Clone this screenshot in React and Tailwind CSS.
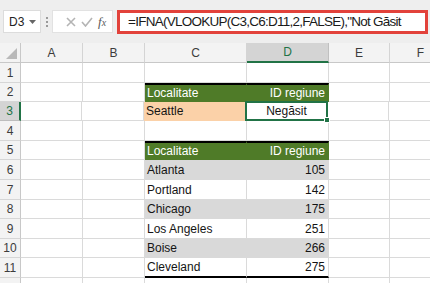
import React from "react";

const rowHeights = [20, 19, 19, 20, 19, 20, 20, 19, 20, 19, 20, 10];

const GREEN = "bg-[#4f7b28]";

function CellC({ r }) {
  const base = "h-full w-[102px] shrink-0 border-r border-b flex items-center px-[2px] text-[12px] text-[#141414]";
  if (r === 2 || r === 5)
    return (
      <div className={`${base} ${GREEN} border-[#4f7b28] border-t-2 border-t-black text-white`}>
        Localitate
      </div>
    );
  if (r === 3)
    return <div className={`${base} bg-[#fbd1a8] border-[#fbd1a8]`}>Seattle</div>;
  const cities = { 6: "Atlanta", 7: "Portland", 8: "Chicago", 9: "Los Angeles", 10: "Boise", 11: "Cleveland" };
  if (cities[r]) {
    const gray = r % 2 === 0;
    const bottom = r === 11 ? "border-b-2 border-b-black" : "";
    return (
      <div className={`${base} ${gray ? "bg-[#d9d9d9] border-[#d9d9d9]" : "bg-white border-[#dadada]"} ${bottom}`}>
        {cities[r]}
      </div>
    );
  }
  return <div className={`${base} bg-white border-[#dadada]`} />;
}

function CellD({ r }) {
  const base = "h-full w-[82px] shrink-0 border-r border-b flex items-center px-[3px] text-[12px] text-[#141414]";
  if (r === 2 || r === 5)
    return (
      <div className={`${base} ${GREEN} border-[#4f7b28] border-t-2 border-t-black text-white justify-end`}>
        ID regiune
      </div>
    );
  if (r === 3)
    return (
      <div className={`${base} bg-white border-[#dadada] justify-center relative`}>
        Negăsit
        <div className="absolute -left-[1px] -top-[1px] -right-[1px] -bottom-[1px] border-2 border-[#217346]" />
        <div className="absolute -right-[3px] -bottom-[3px] w-[6px] h-[6px] bg-[#217346] border border-white" />
      </div>
    );
  const nums = { 6: "105", 7: "142", 8: "175", 9: "251", 10: "266", 11: "275" };
  if (nums[r]) {
    const gray = r % 2 === 0;
    const bottom = r === 11 ? "border-b-2 border-b-black" : "";
    return (
      <div className={`${base} justify-end ${gray ? "bg-[#d9d9d9] border-[#d9d9d9]" : "bg-white border-[#dadada]"} ${bottom}`}>
        {nums[r]}
      </div>
    );
  }
  return <div className={`${base} bg-white border-[#dadada]`} />;
}

function Plain({ w }) {
  return <div className={`h-full ${w} shrink-0 bg-white border-r border-b border-[#dadada]`} />;
}

function Row({ r, h }) {
  const sel = r === 3;
  return (
    <div className="flex" style={{ height: h }}>
      <div
        className={`h-full w-[21px] shrink-0 flex items-center justify-center text-[12px] border-b ${
          sel
            ? "bg-[#d4d4d4] text-[#217346] border-r-2 border-r-[#217346] border-b-[#bdbdbd]"
            : "bg-[#f3f3f3] text-[#3c3c3c] border-r border-r-[#c8c8c8] border-b-[#d6d6d6]"
        }`}
      >
        {r <= 11 ? r : ""}
      </div>
      <Plain w={sel ? "w-[61px]" : "w-[62px]"} />
      <Plain w="w-[62px]" />
      <CellC r={r} />
      <CellD r={r} />
      <Plain w="w-[61px]" />
      <Plain w="w-[62px]" />
    </div>
  );
}

export default function App() {
  return (
    <div className="w-[430px] h-[283px] overflow-hidden bg-[#eeeeee] font-['Liberation_Sans',Arial,sans-serif]">
      {/* Toolbar */}
      <div className="h-[43px] flex items-start pt-[10px] pl-[3px]">
        <div className="w-[38px] h-[23px] bg-white border border-[#dcdcdc] flex items-center pl-[5px] text-[12px] text-[#222]">
          <span>D3</span>
          <svg width="7" height="4" viewBox="0 0 7 4" className="ml-[5px]">
            <path d="M0 0H7L3.5 4Z" fill="#666" />
          </svg>
        </div>
        <div className="w-[11px] h-[23px] flex flex-col items-center justify-center gap-[2px]">
          <div className="w-[2px] h-[2px] bg-[#9a9a9a]" />
          <div className="w-[2px] h-[2px] bg-[#9a9a9a]" />
          <div className="w-[2px] h-[2px] bg-[#9a9a9a]" />
        </div>
        <div className="w-[61px] h-[23px] bg-white border border-[#e2e2e2] flex items-center pl-[13px] gap-[5px]">
          <svg width="10" height="10" viewBox="0 0 10 10">
            <path d="M1 1L9 9M9 1L1 9" stroke="#b4b4b4" strokeWidth="1.6" />
          </svg>
          <svg width="12" height="10" viewBox="0 0 12 10">
            <path d="M1 5L4.5 9L11 1" stroke="#b4b4b4" strokeWidth="1.6" fill="none" />
          </svg>
          <span className="font-['Liberation_Serif',serif] italic text-[13px] text-[#5a5a5a] leading-none">
            f<span className="text-[10px]">x</span>
          </span>
        </div>
        <div className="ml-[4px] w-[311px] h-[24px] bg-white border-[3px] border-[#e2423b] flex items-center pl-[8px] text-[13.5px] tracking-[-0.75px] text-[#1a1a1a] whitespace-nowrap overflow-hidden">
          =IFNA(VLOOKUP(C3,C6:D11,2,FALSE),"Not Găsit
        </div>
      </div>

      {/* Column headers */}
      <div className="flex h-[20px]">
        <div className="h-full w-[21px] shrink-0 bg-[#f3f3f3] border-r border-b border-[#c8c8c8] flex items-end justify-end pr-[3px] pb-[3px]">
          <svg width="11" height="11" viewBox="0 0 11 11">
            <path d="M11 0V11H0Z" fill="#b9b9b9" />
          </svg>
        </div>
        {[
          ["A", "w-[62px]"],
          ["B", "w-[62px]"],
          ["C", "w-[102px]"],
        ].map(([l, w]) => (
          <div key={l} className={`h-full ${w} shrink-0 bg-[#f3f3f3] border-r border-b border-r-[#d4d4d4] border-b-[#c8c8c8] flex items-center justify-center text-[12px] text-[#3c3c3c]`}>
            {l}
          </div>
        ))}
        <div className="h-full w-[82px] shrink-0 bg-[#d4d4d4] border-r border-r-[#c0c0c0] border-b-2 border-b-[#217346] flex items-center justify-center text-[12px] text-[#217346]">
          D
        </div>
        {[
          ["E", "w-[61px]"],
          ["F", "w-[62px]"],
        ].map(([l, w]) => (
          <div key={l} className={`h-full ${w} shrink-0 bg-[#f3f3f3] border-r border-b border-r-[#d4d4d4] border-b-[#c8c8c8] flex items-center justify-center text-[12px] text-[#3c3c3c]`}>
            {l}
          </div>
        ))}
      </div>

      {rowHeights.map((h, i) => (
        <Row key={i} r={i + 1} h={h} />
      ))}
    </div>
  );
}
